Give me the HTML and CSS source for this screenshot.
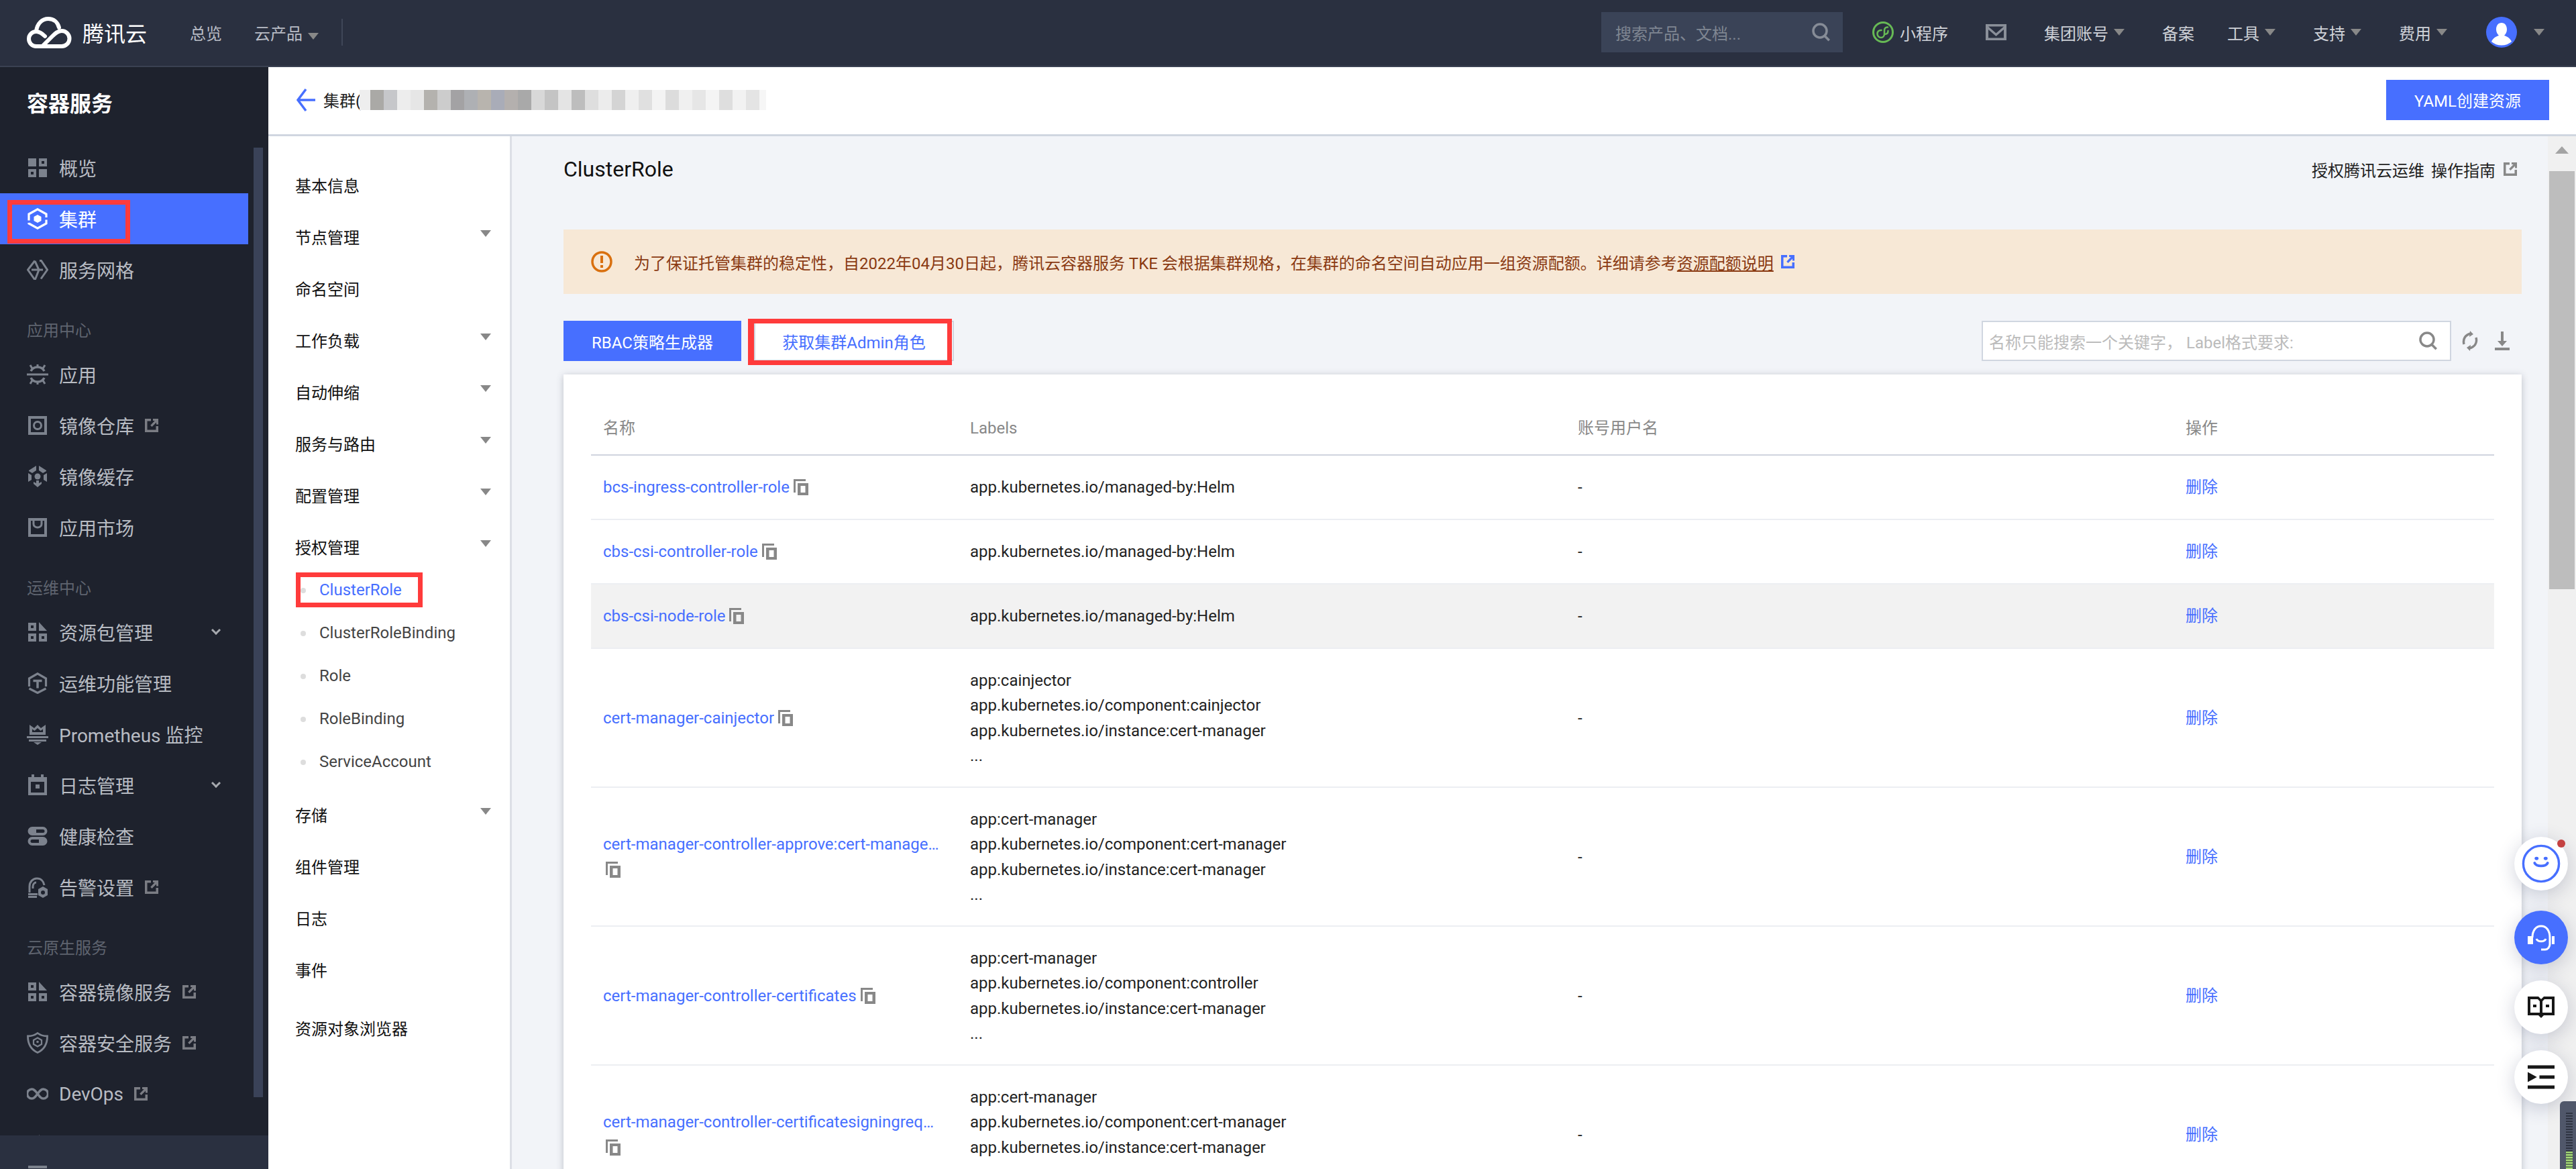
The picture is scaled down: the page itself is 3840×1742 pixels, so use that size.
FILE: index.html
```html
<!DOCTYPE html>
<html lang="zh-CN">
<head>
  <meta charset="UTF-8" />
  <title>ClusterRole - 容器服务</title>
  <link rel="stylesheet" href="styles.css">
</head>
<body>

  <!-- shared icons -->
  <svg class="defs" xmlns="http://www.w3.org/2000/svg">
    <symbol id="i-ext" viewBox="0 0 20 20"><path d="M0 0h9v3.500H3.500v13h13V11H20v9H0z"/><path d="M20 0v8.500h-3V5.500l-6.500 6.500-2.300-2.300L14.700 3H12V0z"/></symbol>
    <symbol id="i-copy" viewBox="0 0 22 24"><path d="M0 0h18v3H3v17H0z"/><path fill-rule="evenodd" d="M6 6h16v18H6zM10.500 10v10h7V10z"/></symbol>
    <symbol id="i-search" viewBox="0 0 28 28"><circle cx="12" cy="12" r="10" fill="none" stroke="currentColor" stroke-width="3.500"/><path d="M19 17l8 8-2.500 2.500-8-8z"/></symbol>
    <symbol id="i-pack" viewBox="0 0 32 32"><path fill-rule="evenodd" d="M2 2h12v12H2zM6 6v4h4V6zM2 18h12v12H2zM6 22v4h4v-4zM18 18h12v12H18zM22 22v4h4v-4z"/><path d="M18 1l12 13H18z"/></symbol>
    <symbol id="i-menu" viewBox="0 0 32 32"><path d="M2 0h28v4H2z"/></symbol>
  </svg>

  <header class="topbar">
    <svg class="logo" viewBox="0 0 67 47" fill="none" stroke="#fff" stroke-width="6" stroke-linecap="round">
      <path d="M14 44H52a11.500 11.500 0 0 0 0-23c-6 0-10 4-14 8L23 44"/>
      <path d="M14 44a11 11 0 0 1 0-22c5 0 8 2 13 7"/>
      <path d="M14 22C15 10 23 3 32 3c8 0 14 5 16 13"/>
    </svg>
    <span class="brand">腾讯云</span>
    <a class="top-link first">总览</a>
    <a class="top-link products">云产品<i class="caret"></i></a>
    <span class="top-divider"></span>

    <div class="top-right">
      <div class="top-search">
        <span>搜索产品、文档...</span>
        <svg class="top-search-ic"><use href="#i-search"/></svg>
      </div>
      <a class="top-item mini">
        <svg class="mini-ic" viewBox="0 0 32 32" fill="none" stroke="#67b955" stroke-linecap="round">
          <circle cx="16" cy="16" r="14.500" stroke-width="3"/>
          <path d="M13.500 13c-4 0-6 2-6 5.500 0 3 2.500 5.500 5.500 5.500s5-2.500 5-5.500v-5c0-3 2-5.500 5-5" stroke-width="2.500"/>
          <path d="M18.500 19c3 0 5-1.500 5-5" stroke-width="2.500"/>
        </svg>
        小程序
      </a>
      <a class="top-item">
        <svg class="mail-ic" viewBox="0 0 31 24"><path fill-rule="evenodd" d="M0 0h31v24H0zM4 3.500l11.500 10 11.500-10zM4 8v12.500h23V8l-11.500 10z"/></svg>
      </a>
      <a class="top-item">集团账号<i class="caret"></i></a>
      <a class="top-item">备案</a>
      <a class="top-item narrow">工具<i class="caret"></i></a>
      <a class="top-item">支持<i class="caret"></i></a>
      <a class="top-item">费用<i class="caret"></i></a>
      <span class="top-item avatar-wrap">
        <svg class="avatar" viewBox="0 0 46 46">
          <circle cx="23" cy="23" r="23" fill="#476fff"/>
          <path fill="#fff" d="M23 9c5 0 8 4 8 10 0 4-2 7-4 9 4 1 9 4 11 9a23 23 0 0 1-30 0c2-5 7-8 11-9-2-2-4-5-4-9 0-6 3-10 8-10z"/>
        </svg>
        <i class="caret far"></i>
      </span>
    </div>
  </header>

  <div class="layout">

    <aside class="sidebar">
      <div class="side-scroll">
        <h2 class="side-title">容器服务</h2>

        <a class="menu-row">
          <svg class="ic" viewBox="0 0 32 32"><path fill-rule="evenodd" d="M2 2h12v12H2zM18 2h12v12H18zM22 6v4h4V6zM2 18h12v12H2zM6 22v4h4v-4zM18 18h12v12H18z"/></svg>
          概览
        </a>
        <a class="menu-row active">
          <svg class="ic line" viewBox="0 0 32 32" stroke="currentColor" stroke-width="3.200">
            <path d="M3 18.500V9L16 1.800 29 9v5"/>
            <path d="M29 17.500V23l-13 7.200L3 23v-1"/>
            <path fill="currentColor" stroke="none" d="M16 10l5.500 3v6L16 22l-5.500-3v-6z"/>
          </svg>
          集群
        </a>
        <a class="menu-row">
          <svg class="ic line" viewBox="0 0 32 32" stroke="currentColor" stroke-width="3">
            <path d="M12 2.500L1.500 16 11 29.500h3M19 2.500h2.500L30.500 16 21 29.500"/>
            <path d="M12 3l6 13-5 13M7 16h17"/>
          </svg>
          服务网格
        </a>

        <div class="menu-section">应用中心</div>
        <a class="menu-row">
          <svg class="ic line" viewBox="0 0 32 32" stroke="currentColor" stroke-width="3.500">
            <path d="M6 11c2-4 6-6 10-6s8 2 10 6M6 21c2 4 6 6 10 6s8-2 10-6"/>
            <path stroke-width="3" d="M0 16h32M5 2l3 5M27 2l-3 5M5 30l3-5M27 30l-3-5M16 1v4M16 27v4"/>
          </svg>
          应用
        </a>
        <a class="menu-row">
          <svg class="ic" viewBox="0 0 32 32"><path fill-rule="evenodd" d="M2 2h28v28H2zM6 6v20h20V6z"/><circle cx="16" cy="16" r="5.500" fill="none" stroke="currentColor" stroke-width="3"/></svg>
          镜像仓库
          <svg class="ext"><use href="#i-ext"/></svg>
        </a>
        <a class="menu-row">
          <svg class="ic" viewBox="0 0 32 32">
            <path d="M14 0v7l-6 4-5-3 0-1zM18 0v7l6 4 5-3 0-1zM2 11l5 3v7l-5 3zM30 11l-5 3v7l5 3z"/>
            <circle cx="16" cy="16" r="4.500"/>
            <path d="M14 22h4v4l4-2v3l-6 5-6-5v-3l4 2z"/>
          </svg>
          镜像缓存
        </a>
        <a class="menu-row">
          <svg class="ic" viewBox="0 0 32 32"><path fill-rule="evenodd" d="M2 2h28v28H2zM6 6v20h20V6z"/><path fill="none" stroke="currentColor" stroke-width="3" d="M10 6v5c0 3 3 5 6 5s6-2 6-5V6"/></svg>
          应用市场
        </a>

        <div class="menu-section">运维中心</div>
        <a class="menu-row">
          <svg class="ic"><use href="#i-pack"/></svg>
          资源包管理
          <i class="chev"></i>
        </a>
        <a class="menu-row">
          <svg class="ic line" viewBox="0 0 32 32" stroke="currentColor" stroke-width="3.200">
            <path d="M3.500 21V9L16 1.800 28.500 9v12"/>
            <path d="M3.500 24L16 30.500 28.500 24"/>
            <path stroke-width="3.500" d="M9.500 12.500h13M16 12.500v11"/>
          </svg>
          运维功能管理
        </a>
        <a class="menu-row">
          <svg class="ic" viewBox="0 0 32 32">
            <path d="M4 2l7 5 5-5 5 5 7-5v15H4zM8 8.500V13h16V8.500l-3.500 2.500L16 7l-4.500 4z" fill-rule="evenodd"/>
            <path d="M0 19h32v3H0zM3 24h26v3H3zM10 28h12l-6 4z"/>
          </svg>
          Prometheus 监控
        </a>
        <a class="menu-row">
          <svg class="ic" viewBox="0 0 32 32"><path fill-rule="evenodd" d="M7 0h4v4h10V0h4v4h5v27H2V4h5zM6 11v16h20V11zM13 15h6v6h-6z"/></svg>
          日志管理
          <i class="chev"></i>
        </a>
        <a class="menu-row">
          <svg class="ic" viewBox="0 0 32 32"><path fill-rule="evenodd" d="M8 2h16a6.500 6.500 0 0 1 0 13H8A6.500 6.500 0 0 1 8 2zM14 6v5h10a2.500 2.500 0 0 0 0-5zM8 17h16a6.500 6.500 0 0 1 0 13H8a6.500 6.500 0 0 1 0-13zM8 21a2.500 2.500 0 0 0 0 5h10v-5z"/></svg>
          健康检查
        </a>
        <a class="menu-row">
          <svg class="ic" viewBox="0 0 32 32">
            <path fill="none" stroke="currentColor" stroke-width="3" d="M4 24v-9C4 8 9 3 15 3s10 4 11 10"/>
            <path fill="none" stroke="currentColor" stroke-width="3" d="M9 18v-3c0-3 2-6 5-6"/>
            <path d="M2 25h14v3H2zM2 29h13v3H2z"/>
            <path fill-rule="evenodd" d="M24 15l7 4v9l-7 4-7-4v-9zM24 21a3 3 0 1 0 0 6 3 3 0 0 0 0-6z"/>
          </svg>
          告警设置
          <svg class="ext"><use href="#i-ext"/></svg>
        </a>

        <div class="menu-section">云原生服务</div>
        <a class="menu-row">
          <svg class="ic"><use href="#i-pack"/></svg>
          容器镜像服务
          <svg class="ext"><use href="#i-ext"/></svg>
        </a>
        <a class="menu-row">
          <svg class="ic line" viewBox="0 0 32 32" stroke="currentColor" stroke-width="2.800">
            <path d="M16 1.500c4 3 9 4.500 14.500 4.500C30.500 18 26 26 16 30.500 6 26 1.500 18 1.500 6 7 6 12 4.500 16 1.500z"/>
            <path stroke-width="2.200" d="M16 8.500l6 3.500v6l-6 3.500-6-3.500v-6z"/>
            <circle cx="16" cy="14.500" r="1.800" fill="currentColor" stroke="none"/>
          </svg>
          容器安全服务
          <svg class="ext"><use href="#i-ext"/></svg>
        </a>
        <a class="menu-row">
          <svg class="ic line" viewBox="0 0 32 32" stroke="currentColor" stroke-width="3.500"><path d="M16 16c-3-4-5-7-8.500-7a7 7 0 0 0 0 14c3.500 0 5.500-3 8.500-7s5-7 8.500-7a7 7 0 0 1 0 14c-3.500 0-5.500-3-8.500-7z"/></svg>
          DevOps
          <svg class="ext"><use href="#i-ext"/></svg>
        </a>
        <a class="menu-row">
          <svg class="ic"><use href="#i-pack"/></svg>
        </a>
      </div>
      <div class="side-foot"><svg class="ic foot-ic"><use href="#i-menu"/></svg></div>
      <span class="side-thumb"></span>
      <span class="red-box box-cluster"></span>
    </aside>

    <div class="content">
      <div class="page-head">
        <svg class="back" viewBox="0 0 28 36" fill="none" stroke="#476fff" stroke-width="3.500"><path d="M14 2L2 18l12 16M2 18h26"/></svg>
        <span class="crumb">集群(</span>
        <span class="mosaic"></span>
        <button class="btn primary yaml">YAML创建资源</button>
      </div>

      <div class="page-body">
        <nav class="subnav">
          <a class="sub-row">基本信息</a>
          <a class="sub-row">节点管理<i class="caret"></i></a>
          <a class="sub-row">命名空间</a>
          <a class="sub-row">工作负载<i class="caret"></i></a>
          <a class="sub-row">自动伸缩<i class="caret"></i></a>
          <a class="sub-row">服务与路由<i class="caret"></i></a>
          <a class="sub-row">配置管理<i class="caret"></i></a>
          <a class="sub-row">授权管理<i class="caret"></i></a>
          <ul class="sub-list">
            <li class="current">ClusterRole<span class="red-box box-role"></span></li>
            <li>ClusterRoleBinding</li>
            <li>Role</li>
            <li>RoleBinding</li>
            <li>ServiceAccount</li>
          </ul>
          <a class="sub-row">存储<i class="caret"></i></a>
          <a class="sub-row">组件管理</a>
          <a class="sub-row">日志</a>
          <a class="sub-row">事件</a>
          <a class="sub-row last">资源对象浏览器</a>
        </nav>

        <main class="main">
          <div class="title-row">
            <h1>ClusterRole</h1>
            <div class="title-links">
              <a>授权腾讯云运维</a>
              <a>操作指南</a>
              <svg class="ext"><use href="#i-ext"/></svg>
            </div>
          </div>

          <div class="alert">
            <svg class="alert-ic" viewBox="0 0 32 32" fill="none" stroke="#d9700f" stroke-width="3.500">
              <circle cx="16" cy="16" r="14"/>
              <path stroke-width="4" d="M16 7v11M16 21v4"/>
            </svg>
            <span>为了保证托管集群的稳定性，自2022年04月30日起，腾讯云容器服务 TKE 会根据集群规格，在集群的命名空间自动应用一组资源配额。详细请参考<a class="alert-link">资源配额说明</a></span>
            <svg class="ext alert-ext"><use href="#i-ext"/></svg>
          </div>

          <div class="toolbar">
            <button class="btn primary rbac">RBAC策略生成器</button>
            <button class="btn outline">获取集群Admin角色<span class="red-box box-admin"></span></button>
            <div class="filter">
              <span>名称只能搜索一个关键字， Label格式要求:</span>
              <svg class="filter-ic"><use href="#i-search"/></svg>
            </div>
            <svg class="tool-ic refresh" viewBox="0 0 24 30" fill="none" stroke="#888" stroke-width="3.500">
              <path d="M3 20C1 12 5 6 13 4M21 10c2 8-2 14-10 16"/>
              <path fill="#888" stroke="none" d="M12 0l5 5-6 4zM12 30l-5-5 6-4z"/>
            </svg>
            <svg class="tool-ic download" viewBox="0 0 22 28" fill="#888"><path d="M9 0h4v14h5l-7 8-7-8h5zM0 24h22v4H0z"/></svg>
          </div>

          <section class="card">
            <table class="grid">
              <colgroup><col class="c-name"><col class="c-labels"><col class="c-user"><col class="c-ops"></colgroup>
              <thead>
                <tr><th>名称</th><th>Labels</th><th>账号用户名</th><th>操作</th></tr>
              </thead>
              <tbody>
                <tr>
                  <td><a class="name">bcs-ingress-controller-role</a> <svg class="copy"><use href="#i-copy"/></svg></td>
                  <td>app.kubernetes.io/managed-by:Helm</td>
                  <td>-</td>
                  <td><a class="del">删除</a></td>
                </tr>
                <tr>
                  <td><a class="name">cbs-csi-controller-role</a> <svg class="copy"><use href="#i-copy"/></svg></td>
                  <td>app.kubernetes.io/managed-by:Helm</td>
                  <td>-</td>
                  <td><a class="del">删除</a></td>
                </tr>
                <tr class="hover">
                  <td><a class="name">cbs-csi-node-role</a> <svg class="copy"><use href="#i-copy"/></svg></td>
                  <td>app.kubernetes.io/managed-by:Helm</td>
                  <td>-</td>
                  <td><a class="del">删除</a></td>
                </tr>
                <tr>
                  <td><a class="name">cert-manager-cainjector</a> <svg class="copy"><use href="#i-copy"/></svg></td>
                  <td>app:cainjector<br>app.kubernetes.io/component:cainjector<br>app.kubernetes.io/instance:cert-manager<br>...</td>
                  <td>-</td>
                  <td><a class="del">删除</a></td>
                </tr>
                <tr>
                  <td><a class="name">cert-manager-controller-approve:cert-manager-io</a> <svg class="copy"><use href="#i-copy"/></svg></td>
                  <td>app:cert-manager<br>app.kubernetes.io/component:cert-manager<br>app.kubernetes.io/instance:cert-manager<br>...</td>
                  <td>-</td>
                  <td><a class="del">删除</a></td>
                </tr>
                <tr>
                  <td><a class="name">cert-manager-controller-certificates</a> <svg class="copy"><use href="#i-copy"/></svg></td>
                  <td>app:cert-manager<br>app.kubernetes.io/component:controller<br>app.kubernetes.io/instance:cert-manager<br>...</td>
                  <td>-</td>
                  <td><a class="del">删除</a></td>
                </tr>
                <tr>
                  <td><a class="name">cert-manager-controller-certificatesigningrequests</a> <svg class="copy"><use href="#i-copy"/></svg></td>
                  <td>app:cert-manager<br>app.kubernetes.io/component:cert-manager<br>app.kubernetes.io/instance:cert-manager<br>...</td>
                  <td>-</td>
                  <td><a class="del">删除</a></td>
                </tr>
              </tbody>
            </table>
          </section>
        </main>

        <div class="scrollbar">
          <span class="scroll-up"></span>
          <span class="scroll-thumb"></span>
        </div>
      </div>
    </div>
  </div>

  <!-- floating helpers -->
  <div class="floats">
    <a class="float-btn">
      <i class="float-dot"></i>
      <svg viewBox="0 0 60 60" fill="none" stroke="#476fff" class="float-ic big">
        <circle cx="30" cy="30" r="27.500" stroke-width="3.500"/>
        <path d="M20 29c3 6 17 6 20 0" stroke-width="4" stroke-linecap="round"/>
        <ellipse cx="23" cy="22" rx="3" ry="2.500" fill="#476fff" stroke="none"/>
        <ellipse cx="37" cy="22" rx="3" ry="2.500" fill="#476fff" stroke="none"/>
      </svg>
    </a>
    <a class="float-btn blue">
      <svg viewBox="0 0 40 40" fill="none" stroke="#fff" class="float-ic">
        <path d="M7 20C7 10 12 3 20 3s13 7 13 17v10c0 4-3 8-7 8h-6" stroke-width="3"/>
        <path d="M13 22c2 5 12 5 14 0" stroke-width="3"/>
        <path fill="#fff" stroke="none" d="M0 18h8v12H0zM36 18h4v12h-4z"/>
      </svg>
    </a>
    <a class="float-btn">
      <svg viewBox="0 0 40 32" class="float-ic" fill="#171717">
        <path fill-rule="evenodd" d="M0 0h16l4 4 4-4h16v28H24l-4 4-4-4H0zM4 4v20h14V7l-3-3zM25 4l-3 3v17h14V4z"/>
        <path d="M8 12h5v4H8zM27 12h5v4h-5z"/>
      </svg>
    </a>
    <a class="float-btn">
      <svg viewBox="0 0 32 32" class="float-ic" fill="#171717">
        <path d="M0 2h32v4H0zM14 14h18v4H14zM0 26h32v4H0zM0 10l11 6-11 6z"/>
      </svg>
    </a>
  </div>
  <div class="dock"><span class="dock-bars"></span></div>

</body>
</html>
```

FILE: styles.css
```css
* {
  box-sizing: border-box;
}

html, body {
  margin: 0;
  height: 100%;
}

body {
  position: relative;
  display: flex;
  flex-direction: column;
  overflow: hidden;
  font-family: Roboto, "Noto Sans CJK SC", sans-serif;
  font-size: 24px;
  color: #222;
  background: #f2f4f8;
}

.defs {
  display: none;
}

a {
  color: inherit;
  text-decoration: none;
}

/* Top bar */
.topbar {
  flex: none;
  display: flex;
  align-items: center;
  height: 100px;
  padding: 0 47px 2px 40px;
  background: #2a3040;
  border-bottom: 2px solid #3a4152;
  color: #b9bdc6;
}

.logo {
  width: 67px;
  height: 47px;
}

.brand {
  margin-left: 16px;
  font-size: 32px;
  color: #fff;
}

.top-link.first {
  margin-left: 64px;
}

.top-link.products {
  margin-left: 48px;
}

.top-divider {
  width: 2px;
  height: 40px;
  margin-left: 34px;
  background: #3f4658;
}

.top-right {
  margin-left: auto;
  display: flex;
  align-items: center;
  gap: 56px;
  color: #d0d3d9;
}

.top-item {
  display: flex;
  align-items: center;
}

.top-item.mini {
  margin-left: -12px;
}

.top-item.narrow {
  margin-left: -7px;
}

.top-search {
  display: flex;
  align-items: center;
  justify-content: space-between;
  width: 360px;
  height: 60px;
  padding: 0 18px 0 21px;
  background: #3a4357;
  color: #7f8692;
}

.top-search-ic {
  width: 28px;
  height: 28px;
  fill: currentColor;
  color: #868c97;
}

.mini-ic {
  width: 32px;
  height: 32px;
  margin-right: 9px;
}

.mail-ic {
  width: 31px;
  height: 24px;
  fill: #8a8f99;
}

.caret {
  display: inline-block;
  width: 0;
  height: 0;
  margin-left: 8px;
  border-style: solid;
  border-width: 10px 8px 0;
  border-color: #888 transparent transparent;
}

.caret.far {
  margin-left: 25px;
}

.avatar-wrap {
  margin-left: 2px;
}

.avatar {
  width: 46px;
  height: 46px;
}

/* Layout */
.layout {
  flex: 1;
  display: flex;
  min-height: 0;
}

/* Product sidebar */
.sidebar {
  position: relative;
  flex: none;
  display: flex;
  flex-direction: column;
  width: 400px;
  background: #1e222d;
  color: #b8bcc3;
}

.side-scroll {
  flex: 1;
  min-height: 0;
  overflow: hidden;
}

.side-title {
  height: 112px;
  margin: 0;
  padding-left: 40px;
  font-size: 32px;
  font-weight: 700;
  line-height: 110px;
  color: #fff;
}

.menu-row {
  display: flex;
  align-items: center;
  height: 76px;
  margin-right: 30px;
  padding: 0 42px 0 40px;
  font-size: 28px;
  white-space: nowrap;
}

.menu-row.active {
  background: #476fff;
  color: #fff;
}

.menu-section {
  height: 80px;
  padding: 36px 0 0 40px;
  font-size: 24px;
  line-height: 34px;
  color: #5f646f;
}

.ic {
  flex: none;
  width: 32px;
  height: 32px;
  margin-right: 16px;
  fill: currentColor;
  color: #7c828d;
}

.ic.line {
  fill: none;
}

.active .ic {
  color: #fff;
}

.ext {
  flex: none;
  width: 20px;
  height: 20px;
  margin-left: 16px;
  fill: #7b7d84;
}

.chev {
  width: 10px;
  height: 10px;
  margin: -6px 1px 0 auto;
  border-right: 3px solid #a6a9ae;
  border-bottom: 3px solid #a6a9ae;
  transform: rotate(45deg);
}

.side-foot {
  flex: none;
  height: 50px;
  padding: 45px 0 0 40px;
  background: #2a3040;
  overflow: hidden;
}

.foot-ic {
  display: block;
}

.side-thumb {
  position: absolute;
  top: 120px;
  left: 378px;
  width: 14px;
  height: 1415px;
  background: #3a4258;
}

/* Annotation boxes drawn on the screenshot */
.red-box {
  position: absolute;
  border: 7px solid #ff3b3b;
  pointer-events: none;
}

.box-cluster {
  top: 198px;
  left: 11px;
  width: 183px;
  height: 65px;
}

.box-role {
  top: 6px;
  left: 1px;
  width: 189px;
  height: 52px;
}

.box-admin {
  top: -5px;
  left: -11px;
  width: 304px;
  height: 69px;
  border-width: 7px 7px 7px 9px;
}

/* Page header */
.content {
  flex: 1;
  min-width: 0;
  display: flex;
  flex-direction: column;
}

.page-head {
  flex: none;
  display: flex;
  align-items: center;
  height: 103px;
  padding: 0 40px 3px 42px;
  background: #fff;
  border-bottom: 3px solid #d0d6e0;
}

.back {
  width: 28px;
  height: 36px;
  margin-right: 12px;
}

.crumb {
  color: #222;
}

.mosaic {
  width: 606px;
  height: 30px;
  margin-left: -2px;
  background: linear-gradient(90deg,
    #eee 0 16px, #aaa9a6 16px 36px, #c6c7ca 36px 56px, #ededed 56px 76px, #e6e6e6 76px 96px,
    #b4b2ae 96px 116px, #ccc 116px 136px, #a3a2a4 136px 156px, #aeb0b4 156px 176px, #b8b4ae 176px 196px,
    #a9acb8 196px 216px, #b4b0ae 216px 236px, #a9a9a9 236px 256px, #d8d8d8 256px 276px, #c4c4c4 276px 296px,
    #e4e4e4 296px 316px, #bdbdbd 316px 336px, #dedede 336px 356px, #ececec 356px 376px, #d4d4d4 376px 396px,
    #efefef 396px 416px, #e0e0e0 416px 436px, #f3f3f3 436px 456px, #dcdcdc 456px 476px, #f0f0f0 476px 496px,
    #e6e6e6 496px 516px, #f4f4f4 516px 536px, #dedede 536px 556px, #f2f2f2 556px 576px, #e4e4e4 576px 596px, #f6f6f6 596px 606px);
}

.yaml {
  margin-left: auto;
  width: 243px;
}

/* Buttons */
.btn {
  height: 60px;
  padding: 0;
  border: none;
  font: inherit;
}

.btn.primary {
  background: #476fff;
  color: #fff;
}

.btn.rbac {
  width: 265px;
}

.btn.outline {
  position: relative;
  width: 298px;
  margin-left: 19px;
  background: #fff;
  border: 2px solid #d0d6e0;
  color: #476fff;
}

/* Cluster sub navigation */
.page-body {
  flex: 1;
  min-height: 0;
  display: flex;
}

.subnav {
  flex: none;
  width: 363px;
  padding: 34px 0 0 40px;
  background: #fff;
  border-right: 3px solid #dcdfe6;
}

.sub-row {
  display: flex;
  align-items: center;
  height: 77px;
  padding-right: 28px;
  justify-content: space-between;
  color: #111;
}

.sub-row .caret {
  margin-top: -10px;
}

.sub-row.last {
  margin-top: 10px;
}

.sub-list {
  margin: -6px 0 8px;
  padding: 0;
  list-style: none;
}

.sub-list li {
  position: relative;
  display: flex;
  align-items: center;
  height: 64px;
  padding-left: 36px;
  color: #444;
}

.sub-list li::before {
  content: "";
  position: absolute;
  left: 8px;
  top: 29px;
  width: 8px;
  height: 8px;
  border-radius: 50%;
  background: #ddd;
}

.sub-list li.current {
  color: #476fff;
}

/* Main panel */
.main {
  flex: 1;
  min-width: 0;
  padding: 24px 39px 0 77px;
  overflow: hidden;
}

.title-row {
  display: flex;
  align-items: center;
  justify-content: space-between;
  height: 50px;
  margin-bottom: 65px;
}

.title-row h1 {
  margin: 0;
  font-size: 32px;
  font-weight: 400;
  color: #111;
}

.title-links {
  display: flex;
  align-items: center;
  gap: 10px;
  padding-right: 7px;
}

.title-links .ext {
  margin-left: 2px;
  fill: #888;
}

.alert {
  display: flex;
  align-items: center;
  height: 96px;
  padding-left: 41px;
  background: #f7e8d6;
  color: #8a3a12;
}

.alert-ic {
  width: 32px;
  height: 32px;
  margin-right: 32px;
}

.alert-link {
  text-decoration: underline;
}

.alert-ext {
  margin-left: 11px;
  fill: #476fff;
}

.toolbar {
  display: flex;
  align-items: center;
  height: 60px;
  margin-top: 40px;
}

.filter {
  display: flex;
  align-items: center;
  justify-content: space-between;
  width: 700px;
  height: 60px;
  margin-left: auto;
  padding: 0 18px 0 9px;
  background: #fff;
  border: 2px solid #d0d6e0;
  color: #bbb;
}

.filter-ic {
  width: 28px;
  height: 28px;
  fill: currentColor;
  color: #888;
}

.tool-ic {
  flex: none;
}

.refresh {
  width: 24px;
  height: 30px;
  margin-left: 16px;
}

.download {
  width: 22px;
  height: 28px;
  margin: 0 18px 0 25px;
}

/* Table */
.card {
  margin-top: 20px;
  padding: 40px 41px 0;
  background: #fff;
  box-shadow: 0 2px 10px rgba(54, 58, 80, 0.28);
}

.grid {
  width: 100%;
  border-collapse: collapse;
  table-layout: fixed;
  line-height: 37.25px;
}

.c-name {
  width: 545px;
}

.c-labels {
  width: 906px;
}

.c-user {
  width: 906px;
}

.grid th {
  height: 80px;
  padding: 2px 20px 0;
  text-align: left;
  font-weight: 400;
  color: #888;
  border-bottom: 2px solid #d0d4de;
}

.grid td {
  height: 96px;
  padding: 29px 20px 27px;
  vertical-align: middle;
  border-bottom: 2px solid #eceef2;
}

.grid th:first-child,
.grid td:first-child {
  padding-left: 18px;
}

.grid td:first-child {
  word-spacing: -4px;
}

.grid tr.hover td {
  background: #f2f2f2;
}

.name {
  display: inline-block;
  max-width: 502px;
  overflow: hidden;
  vertical-align: bottom;
  white-space: nowrap;
  text-overflow: ellipsis;
  color: #476fff;
}

.copy {
  width: 22px;
  height: 24px;
  margin-left: 4px;
  vertical-align: -4px;
  fill: #888;
}

.del {
  color: #476fff;
}

/* Right page scrollbar */
.scrollbar {
  flex: none;
  width: 42px;
  padding: 0 2px;
  background: #f0f0f0;
}

.scroll-up {
  display: block;
  width: 0;
  height: 0;
  margin: 15px auto 26px;
  border-style: solid;
  border-width: 0 10px 11px;
  border-color: transparent transparent #a3a3a3;
}

.scroll-thumb {
  display: block;
  height: 623px;
  background: #bdbdbd;
}

/* Floating helper buttons */
.floats {
  position: absolute;
  top: 1247px;
  right: 12px;
  display: flex;
  flex-direction: column;
  gap: 24px;
}

.float-btn {
  position: relative;
  display: flex;
  align-items: center;
  justify-content: center;
  width: 80px;
  height: 80px;
  border-radius: 50%;
  background: #fff;
  box-shadow: 0 6px 28px rgba(40, 50, 90, 0.22);
}

.float-btn:nth-child(2) {
  margin-top: 6px;
}

.float-btn.blue {
  background: #476fff;
}

.float-dot {
  position: absolute;
  top: 4px;
  right: 4px;
  width: 12px;
  height: 12px;
  border-radius: 50%;
  background: #c44141;
}

.float-ic {
  width: 40px;
  height: 40px;
}

.float-ic.big {
  width: 58px;
  height: 58px;
}

.dock {
  position: absolute;
  right: 0;
  bottom: 0;
  width: 24px;
  height: 101px;
  padding: 17px 5px 0 9px;
  background: #50576a;
  border-radius: 6px 0 0 0;
}

.dock-bars {
  display: block;
  height: 84px;
  background:
    repeating-linear-gradient(180deg, #2f3442 0 2px, transparent 2px 4px) 0 0 / 100% 58px no-repeat,
    repeating-linear-gradient(180deg, #a7dc78 0 2px, #5d7a52 2px 4px) 0 58px / 100% 26px no-repeat;
}
```
